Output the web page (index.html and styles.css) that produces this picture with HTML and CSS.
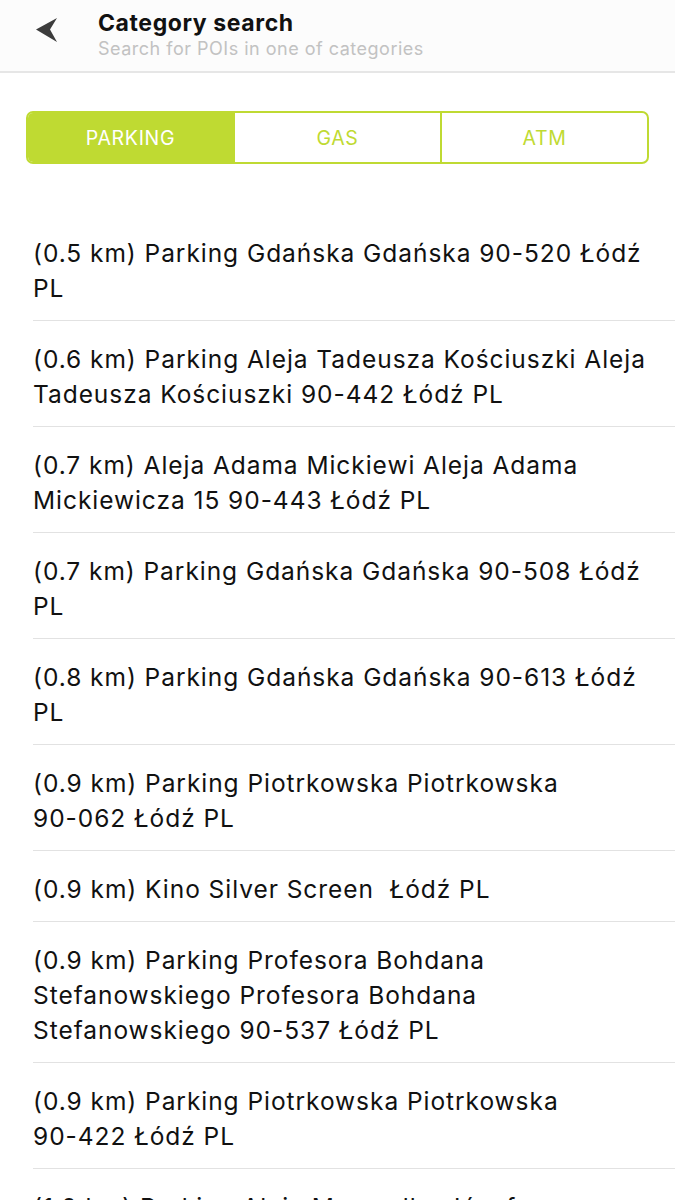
FILE: index.html
```html
<!DOCTYPE html>
<html>
<head>
<meta charset="utf-8">
<link rel="stylesheet" href="styles.css">
</head>
<body>
<header class="topbar">
  <div class="back">
    <svg width="24" height="26" viewBox="0 0 24 26"><path d="M1 12.5 L22 1 L15 12.5 L22 25 Z" fill="#3c3c3c"/></svg>
  </div>
  <div class="titles">
    <div class="title">Category search</div>
    <div class="subtitle">Search for POIs in one of categories</div>
  </div>
</header>
<div class="segmented">
  <div class="seg active">PARKING</div>
  <div class="seg">GAS</div>
  <div class="seg">ATM</div>
</div>
<ul class="list">
  <li>(0.5 km) Parking Gdańska Gdańska <span class="nw">90-520</span> Łódź PL</li>
  <li>(0.6 km) Parking Aleja Tadeusza Kościuszki Aleja Tadeusza Kościuszki <span class="nw">90-442</span> Łódź PL</li>
  <li>(0.7 km) Aleja Adama Mickiewi Aleja Adama Mickiewicza 15 <span class="nw">90-443</span> Łódź PL</li>
  <li>(0.7 km) Parking Gdańska Gdańska <span class="nw">90-508</span> Łódź PL</li>
  <li>(0.8 km) Parking Gdańska Gdańska <span class="nw">90-613</span> Łódź PL</li>
  <li>(0.9 km) Parking Piotrkowska Piotrkowska <span class="nw">90-062</span> Łódź PL</li>
  <li>(0.9 km) Kino Silver Screen&nbsp; Łódź PL</li>
  <li>(0.9 km) Parking Profesora Bohdana Stefanowskiego Profesora Bohdana Stefanowskiego <span class="nw">90-537</span> Łódź PL</li>
  <li>(0.9 km) Parking Piotrkowska Piotrkowska <span class="nw">90-422</span> Łódź PL</li>
  <li>(1.0 km) Parking Aleja Marszałka Józefa Piłsudskiego <span class="nw">90-051</span> Łódź PL</li>
</ul>
</body>
</html>
```
FILE: styles.css
```css
* { box-sizing: border-box; }
html, body { margin: 0; padding: 0; background: #fff; }
body {
  font-family: Inter, Roboto, "Liberation Sans", sans-serif;
  color: #111;
  width: 675px;
  height: 1200px;
  overflow: hidden;
}
.topbar {
  height: 73px;
  background: #fcfcfc;
  border-bottom: 2px solid #e6e6e6;
  display: flex;
  align-items: flex-start;
}
.back {
  width: 98px;
  padding: 17px 0 0 35px;
}
.back svg { display: block; }
.titles { padding-top: 8px; }
.title {
  font-size: 23px;
  font-weight: 700;
  letter-spacing: 0.6px;
  color: #111;
  line-height: 30px;
}
.subtitle {
  font-size: 18px;
  letter-spacing: 0.5px;
  color: #c2c2c2;
  line-height: 22px;
}
.segmented {
  margin: 38px 26px 0 26px;
  height: 53px;
  border: 2px solid #bfda32;
  border-radius: 7px;
  display: flex;
  overflow: hidden;
}
.seg {
  flex: 1;
  display: flex;
  align-items: center;
  justify-content: center;
  font-size: 19.5px;
  letter-spacing: 0.7px;
  color: #bfda32;
  border-left: 2px solid #bfda32;
}
.seg:first-child { border-left: none; }
.seg.active { background: #bfda32; color: #fff; }
.list {
  list-style: none;
  margin: 51px 0 0 33px;
  padding: 0;
}
.list li {
  font-size: 24.5px;
  letter-spacing: 0.95px;
  line-height: 35px;
  padding: 21px 20px 14px 0;
  border-bottom: 1px solid #e2e2e2;
}
.nw { white-space: nowrap; }
```
